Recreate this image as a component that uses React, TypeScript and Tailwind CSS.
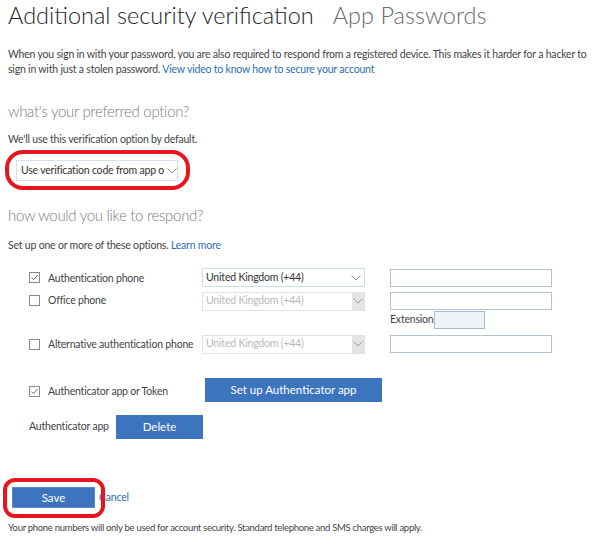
import React from "react";

function Checkbox({ checked }: { checked?: boolean }) {
  return (
    <span className="flex h-[11px] w-[11px] shrink-0 items-center justify-center border border-[#8a8a8a] bg-white">
      {checked && (
        <svg width="9" height="9" viewBox="0 0 9 9" fill="none">
          <path d="M1.5 4.6 L3.6 6.7 L7.6 2" stroke="#6b6b6b" strokeWidth="1" />
        </svg>
      )}
    </span>
  );
}

function Chevron({ color = "#8c8c8c" }: { color?: string }) {
  return (
    <svg width="10" height="6" viewBox="0 0 10 6" fill="none">
      <path d="M0.5 0.5 L5 5 L9.5 0.5" stroke={color} strokeWidth="1" />
    </svg>
  );
}

function CountrySelect({ disabled }: { disabled?: boolean }) {
  return (
    <div
      className={`flex h-[19px] w-[163px] items-center border pl-[3px] ${
        disabled ? "border-[#dde4ea] text-[#b9b9b9]" : "border-[#cddcec] text-[#333]"
      }`}
    >
      <span className="flex-1 whitespace-nowrap">United Kingdom (+44)</span>
      {disabled ? (
        <span className="flex h-full w-[12px] items-center justify-center bg-[#e4e4e4]">
          <Chevron color="#9a9a9a" />
        </span>
      ) : (
        <span className="mr-[3px] flex items-center">
          <Chevron />
        </span>
      )}
    </div>
  );
}

function PhoneInput() {
  return <div className="h-[18px] w-[162px] border border-[#b4c3d2] bg-white" />;
}

export default function App() {
  return (
    <div className="h-[550px] w-[602px] overflow-hidden bg-white pl-[8px] pt-[1px] font-['Lato',sans-serif] text-[10.5px] tracking-[-0.2px] text-[#444]">
      <h1 className="flex items-baseline gap-[19px] text-[23.5px] leading-[28px] font-light tracking-normal">
        <span className="text-[#1e1e1e]">Additional security verification</span>
        <span className="text-[#6b6b6b]">App Passwords</span>
      </h1>

      <p className="mt-[18px] leading-[15px] whitespace-nowrap">
        When you sign in with your password, you are also required to respond from a registered device. This makes it harder for a hacker to
        <br />
        sign in with just a stolen password.{" "}
        <a className="text-[#2e6db4]">View video to know how to secure your account</a>
      </p>

      <h2 className="mt-[24px] text-[15px] leading-[20px] font-light tracking-[-0.3px] text-[#7b7b7b]">
        what's your preferred option?
      </h2>
      <p className="mt-[11px] leading-[14px]">We'll use this verification option by default.</p>

      <div className="relative mt-[14px] ml-[8px] w-[162px]">
        <div className="flex h-[21px] w-[162px] items-center border border-[#d3e1ee] pl-[4px] text-[#333]">
          <span className="w-[143px] overflow-hidden whitespace-nowrap">Use verification code from app or token</span>
          <span className="ml-[3px] flex items-center">
            <Chevron />
          </span>
        </div>
        <div className="pointer-events-none absolute -top-[10px] -right-[12px] -bottom-[9px] -left-[11px] rounded-[18px] border-[4px] border-[#e8141e]" />
      </div>

      <h2 className="mt-[24px] text-[15px] leading-[20px] font-light tracking-[-0.3px] text-[#7b7b7b]">
        how would you like to respond?
      </h2>
      <p className="mt-[13px] leading-[14px]">
        Set up one or more of these options. <a className="text-[#2e6db4]">Learn more</a>
      </p>

      <div className="ml-[21px] whitespace-nowrap">
        <div className="mt-[16px] flex h-[19px] items-center">
          <div className="flex w-[173px] items-center gap-[8px]">
            <Checkbox checked />
            <span className="mt-[2px]">Authentication phone</span>
          </div>
          <CountrySelect />
          <div className="ml-[25px]">
            <PhoneInput />
          </div>
        </div>

        <div className="mt-[5px] flex h-[18px] items-center">
          <div className="flex w-[173px] items-center gap-[8px] self-start pt-[1px]">
            <Checkbox />
            <span>Office phone</span>
          </div>
          <CountrySelect disabled />
          <div className="ml-[25px]">
            <PhoneInput />
          </div>
        </div>

        <div className="mt-[1px] flex h-[18px] items-center pl-[361px]">
          <span>Extension</span>
          <div className="h-[18px] w-[51px] border border-[#a9bccf] bg-[#eff3f7]" />
        </div>

        <div className="mt-[6px] flex h-[18px] items-center">
          <div className="flex w-[173px] items-center gap-[8px]">
            <Checkbox />
            <span className="mt-[2px]">Alternative authentication phone</span>
          </div>
          <CountrySelect disabled />
          <div className="ml-[25px]">
            <PhoneInput />
          </div>
        </div>

        <div className="mt-[25px] flex h-[24px] items-center">
          <div className="mt-[3px] flex w-[176px] items-center gap-[8px]">
            <Checkbox checked />
            <span>Authenticator app or Token</span>
          </div>
          <button className="h-[24px] w-[177px] bg-[#3d74be] text-[11.5px] tracking-normal text-white">Set up Authenticator app</button>
        </div>

        <div className="mt-[13px] flex h-[24px] items-center">
          <span className="w-[87px]">Authenticator app</span>
          <button className="h-[24px] w-[87px] bg-[#3d74be] text-[11.5px] tracking-normal text-white">Delete</button>
        </div>
      </div>

      <div className="mt-[48px] ml-[4px] flex h-[21px] items-center">
        <div className="relative">
          <button className="h-[21px] w-[83px] border border-[#5a8ad0] bg-[#3d74be] text-[11.5px] tracking-normal text-white">Save</button>
          <div className="pointer-events-none absolute -top-[9px] -right-[10px] -bottom-[10px] -left-[9px] rounded-[12px] border-[4px] border-[#e8141e]" />
        </div>
        <a className="ml-[4px] text-[#2e6db4]">Cancel</a>
      </div>

      <p className="mt-[13px] text-[9.5px] leading-[14px] tracking-[-0.3px]">
        Your phone numbers will only be used for account security. Standard telephone and SMS charges will apply.
      </p>
    </div>
  );
}
